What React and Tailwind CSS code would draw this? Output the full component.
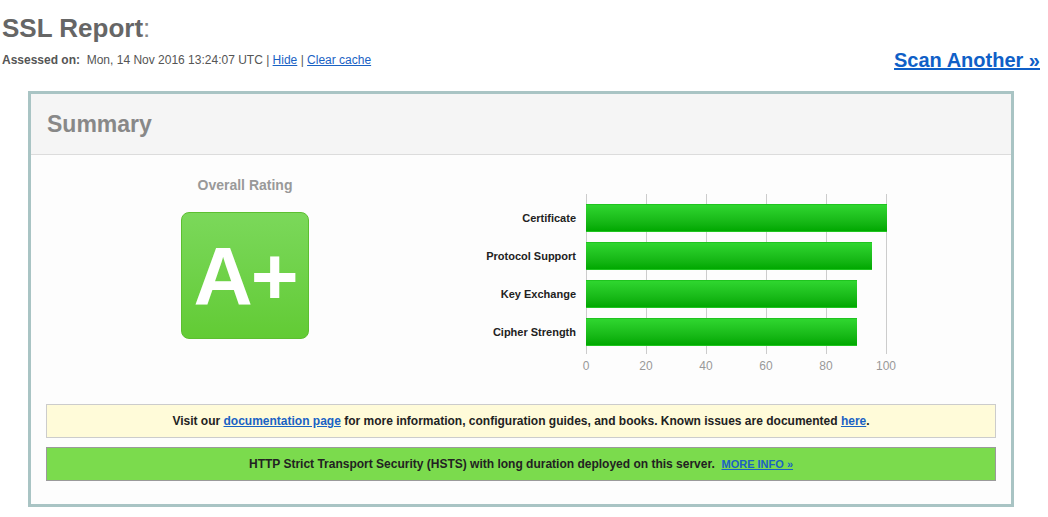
import React from 'react';

const BARS = [
  { label: 'Certificate', value: 100 },
  { label: 'Protocol Support', value: 95 },
  { label: 'Key Exchange', value: 90 },
  { label: 'Cipher Strength', value: 90 },
];

const TICKS = [0, 20, 40, 60, 80, 100];

function RatingChart() {
  // plot area is 300px wide, 3px per point
  return (
    <div className="flex">
      <div className="flex w-[127px] flex-col gap-[10px] pt-[10px] pr-[10px]">
        {BARS.map((b) => (
          <div key={b.label} className="flex h-[28px] items-center justify-end text-[11px] font-bold text-[#222]">
            {b.label}
          </div>
        ))}
      </div>
      <div className="flex flex-col">
        <div className="relative h-[160px] w-[300px]">
          {TICKS.map((t) => (
            <div
              key={t}
              className="absolute top-0 h-full w-px bg-[#cccccc]"
              style={{ left: t * 3 }}
            />
          ))}
          <div className="relative flex flex-col gap-[10px] pt-[10px]">
            {BARS.map((b) => (
              <div
                key={b.label}
                className="h-[28px] border-y border-[#1fc41f] bg-gradient-to-b from-[#2fd62f] to-[#00a800]"
                style={{ width: b.value * 3 + 1 }}
              />
            ))}
          </div>
        </div>
        <div className="relative h-[20px] w-[300px]">
          {TICKS.map((t) => (
            <span
              key={t}
              className="absolute top-[3px] -translate-x-1/2 text-[12px] text-[#999]"
              style={{ left: t * 3 }}
            >
              {t}
            </span>
          ))}
        </div>
      </div>
    </div>
  );
}

export default function App() {
  return (
    <div className="h-[517px] w-[1048px] bg-white font-['Liberation_Sans',Arial,sans-serif]">
      <div className="flex items-end justify-between pl-[2px] pr-[8px] pt-[12px]">
        <div>
          <h1 className="text-[26px] font-bold leading-[32px] text-[#666]">
            SSL Report<span className="font-normal text-[#888]">:</span>
          </h1>
          <p className="mt-[8px] text-[12px] leading-[16px] text-[#555]">
            <span className="font-bold">Assessed on:</span>&nbsp; Mon, 14 Nov 2016 13:24:07 UTC |{' '}
            <a href="#" className="text-[#1a62c4] underline">Hide</a> |{' '}
            <a href="#" className="text-[#1a62c4] underline">Clear cache</a>
          </p>
        </div>
        <a href="#" className="mb-[-4px] text-[20px] font-bold leading-[24px] text-[#0f5fc7] underline">
          Scan Another »
        </a>
      </div>

      <div className="ml-[28px] mt-[23px] w-[986px] border-[3px] border-[#a9c4c4] bg-[#fdfdfd]">
        <div className="flex h-[61px] items-center border-b border-[#dcdcdc] bg-[#f5f5f5] pl-[16px]">
          <h2 className="text-[23px] font-bold text-[#888]">Summary</h2>
        </div>

        <div className="flex pt-[21px]">
          <div className="flex w-[428px] flex-col items-center">
            <div className="text-[14px] font-bold leading-[18px] text-[#999]">Overall Rating</div>
            <div className="mt-[18px] flex h-[127px] w-[128px] items-center justify-center rounded-[8px] border border-[#5cbf30] bg-gradient-to-b from-[#7bd85a] to-[#62cb34]">
              <span className="text-[82px] font-bold leading-none tracking-[-2px] text-white">A+</span>
            </div>
          </div>
          <div className="pt-[18px]">
            <RatingChart />
          </div>
        </div>

        <div className="mx-[15px] mt-[30px] flex h-[34px] items-center justify-center border border-[#cccccc] bg-[#fffbd9] text-[12px] font-bold text-[#222]">
          <span>
            Visit our <a href="#" className="text-[#1a62c4] underline">documentation page</a> for more information, configuration guides, and books. Known issues are documented{' '}
            <a href="#" className="text-[#1a62c4] underline">here</a>.
          </span>
        </div>

        <div className="mx-[15px] mb-[23px] mt-[9px] flex h-[34px] items-center justify-center border border-[#9a9a9a] bg-[#7bdb4d] text-[12px] font-bold text-[#222]">
          <span>
            HTTP Strict Transport Security (HSTS) with long duration deployed on this server.&nbsp;{' '}
            <a href="#" className="text-[11px] text-[#1a62c4] underline">MORE INFO »</a>
          </span>
        </div>
      </div>
    </div>
  );
}
